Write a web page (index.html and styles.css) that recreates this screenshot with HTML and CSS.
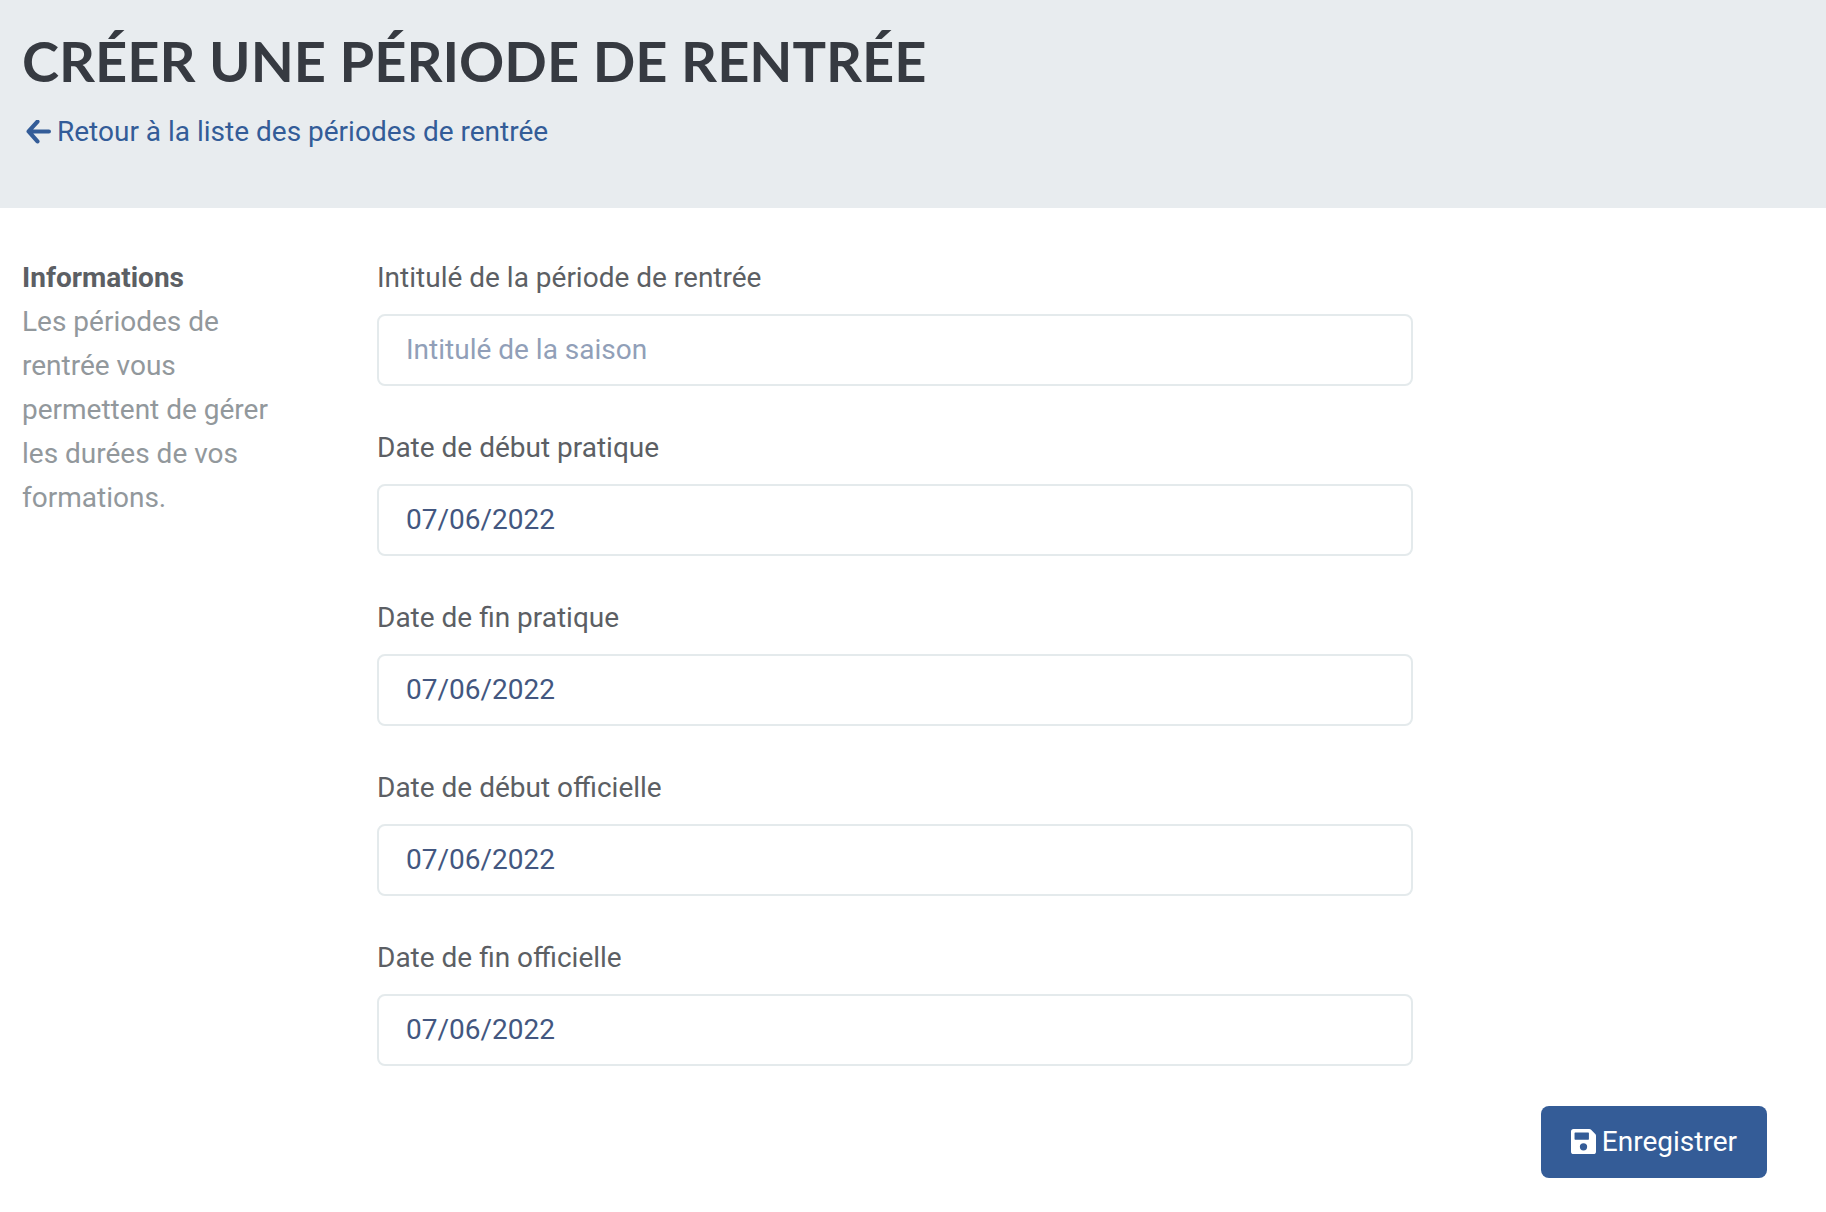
FILE: index.html
```html
<!DOCTYPE html>
<html lang="fr">
<head>
    <meta charset="UTF-8">
    <meta name="viewport" content="width=device-width, initial-scale=1.0">
    <title>Créer une période de rentrée</title>
    <link rel="stylesheet" href="styles.css">
</head>
<body>
    <header class="page-header">
        <h1>Créer une période de rentrée</h1>
        <a class="back-link" href="#">
            <svg class="icon" viewBox="0 0 24 24" fill="none" stroke="currentColor" stroke-width="4" stroke-linecap="round" stroke-linejoin="round" aria-hidden="true">
                <path d="M11 1.5L2.5 11L11 20.5M3 11H22"/>
            </svg>
            Retour à la liste des périodes de rentrée
        </a>
    </header>

    <form class="season-form">
        <div class="form-row">
            <div class="form-info">
                <h2>Informations</h2>
                <p>Les périodes de rentrée vous permettent de gérer les durées de vos formations.</p>
            </div>
            <div class="form-fields">
                <div class="form-group">
                    <label for="name">Intitulé de la période de rentrée</label>
                    <input type="text" id="name" placeholder="Intitulé de la saison">
                </div>
                <div class="form-group">
                    <label for="practicalStart">Date de début pratique</label>
                    <input type="text" id="practicalStart" value="07/06/2022">
                </div>
                <div class="form-group">
                    <label for="practicalEnd">Date de fin pratique</label>
                    <input type="text" id="practicalEnd" value="07/06/2022">
                </div>
                <div class="form-group">
                    <label for="officialStart">Date de début officielle</label>
                    <input type="text" id="officialStart" value="07/06/2022">
                </div>
                <div class="form-group">
                    <label for="officialEnd">Date de fin officielle</label>
                    <input type="text" id="officialEnd" value="07/06/2022">
                </div>
            </div>
        </div>
        <div class="form-actions">
            <button type="submit" class="submit-button">
                <svg class="icon" viewBox="0 0 24 24" fill="currentColor" fill-rule="evenodd" aria-hidden="true">
                    <path d="M2.5 0H17.5Q18.6 0 19.3 .7L23.3 4.7Q24 5.4 24 6.5V21.5Q24 24 21.5 24H2.5Q0 24 0 21.5V2.5Q0 0 2.5 0ZM4 3.4Q3.4 3.4 3.4 4V9.6Q3.4 10.3 4 10.3H16.6Q17.2 10.3 17.2 9.6V4Q17.2 3.4 16.6 3.4ZM12 13.6A3.5 3.5 0 1 0 12 20.6A3.5 3.5 0 1 0 12 13.6Z"/>
                </svg>
                Enregistrer
            </button>
        </div>
    </form>
</body>
</html>
```
FILE: styles.css
```css
body {
    font-family: Roboto, sans-serif;
    font-size: 28px;
    line-height: 44px;
    color: #5c5f64;
    background-color: #fff;
    margin: 0;
}
.page-header {
    background-color: #e8ecef;
    padding: 29px 22px 54px;
}
.page-header h1 {
    margin: 0 0 17px;
    font-family: Lato, sans-serif;
    font-size: 56px;
    font-weight: 700;
    line-height: 64px;
    text-transform: uppercase;
    color: #363a41;
}
.back-link {
    display: flex;
    align-items: center;
    gap: 6px;
    padding-left: 4px;
    color: #335c98;
    text-decoration: none;
}
.back-link:hover {
    text-decoration: underline;
}
.icon {
    flex: none;
    width: 25px;
    height: 25px;
}
.season-form {
    padding: 48px 29px 34px 22px;
}
.form-row {
    display: flex;
}
.form-info {
    width: 20%;
    box-sizing: border-box;
    padding-right: 90px;
}
.form-info h2 {
    margin: 0;
    font-size: 28px;
    font-weight: 700;
}
.form-info p {
    margin: 0;
    color: #92989c;
}
.form-fields {
    width: 60%;
    box-sizing: border-box;
    padding-right: 29px;
}
.form-group {
    margin-bottom: 40px;
}
.form-group label {
    display: block;
    margin-bottom: 14px;
}
.form-group input {
    display: block;
    width: 100%;
    height: 72px;
    box-sizing: border-box;
    padding: 0 27px 2px;
    border: 2px solid #e4eaec;
    border-radius: 8px;
    background-color: #fff;
    font-family: inherit;
    font-size: 28px;
    color: #435780;
}
.form-group input::placeholder {
    color: #919fb8;
    opacity: 1;
}
.form-actions {
    display: flex;
    justify-content: flex-end;
    padding-right: 30px;
}
.submit-button {
    display: flex;
    align-items: center;
    gap: 6px;
    height: 72px;
    padding: 0 30px 2px;
    border: none;
    border-radius: 8px;
    background-color: #345c97;
    color: #fff;
    font-family: inherit;
    font-size: 28px;
    cursor: pointer;
}
.submit-button:hover {
    background-color: #2b4d7f;
}
```
